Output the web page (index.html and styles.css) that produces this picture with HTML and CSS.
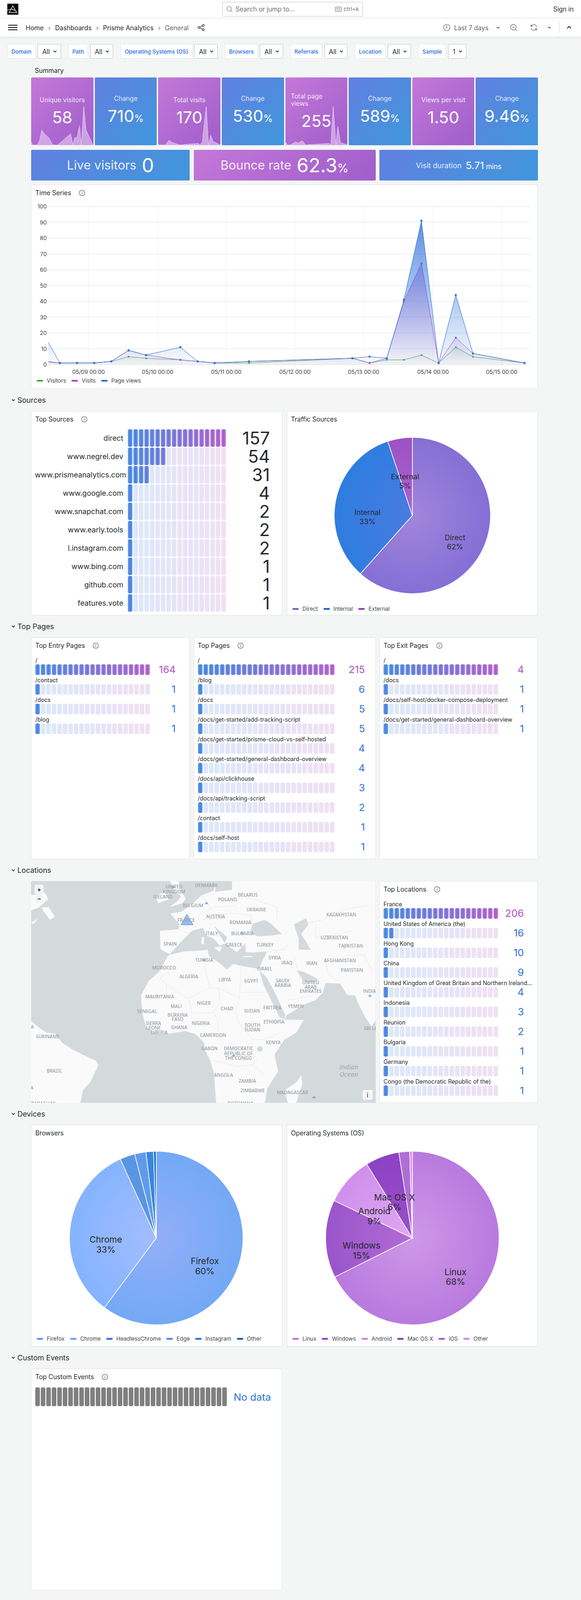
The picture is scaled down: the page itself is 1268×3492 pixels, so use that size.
FILE: index.html
```html
<!DOCTYPE html>
<html lang="en">
	<head>
		<meta charset="UTF-8" />
		<meta name="viewport" content="width=device-width, initial-scale=1.0" />
		<title>General - Prisme Analytics</title>
		<link rel="stylesheet" href="styles.css">
	</head>
	<body>
		<svg class="defs" width="0" height="0">
			<symbol id="i-info" viewBox="0 0 14 14">
				<circle cx="7" cy="7" r="6" fill="none" stroke="currentColor" stroke-width="1.1" />
				<path d="M7 6.4v3.4" stroke="currentColor" stroke-width="1.3" />
				<circle cx="7" cy="4.4" r=".8" fill="currentColor" />
			</symbol>
			<symbol id="i-chevron" viewBox="0 0 10 10">
				<path d="M2 3.6l3 3 3-3" fill="none" stroke="currentColor" stroke-width="1.5" />
			</symbol>
		</svg>

		<header class="topbar">
			<svg class="logo" viewBox="0 0 24 24">
				<rect width="24" height="24" fill="#000" />
				<path d="M12 4.8L4 19.4h16.6z" fill="none" stroke="#fff" stroke-width="1.2" />
				<path d="M0 13.8l9.4-2.4" stroke="#fff" stroke-width="1" />
				<path d="M9.4 11.4l6.6 1.4" stroke="#ee3b3b" stroke-width="1" />
				<path d="M9.4 11.6l7.2 3" stroke="#e8e337" stroke-width="1" />
				<path d="M9.4 11.8l8 4.4" stroke="#47d147" stroke-width="1" />
				<path d="M9.4 12l4 4.8" stroke="#d04fd0" stroke-width="1" />
			</svg>
			<div class="search">
				<svg class="search-icon" viewBox="0 0 16 16">
					<circle cx="7" cy="7" r="5.6" fill="none" stroke="currentColor" stroke-width="1.2" />
					<path d="M11 11l4 4" stroke="currentColor" stroke-width="1.2" />
				</svg>
				<span class="search-text">Search or jump to...</span>
				<svg class="keyboard" viewBox="0 0 16 14">
					<rect x="1" y="2" width="14" height="10" rx="1.5" fill="none" stroke="currentColor" stroke-width="1.1" />
					<path d="M3 5h10M3 7h10M4.5 9.5h7" stroke="currentColor" stroke-width="1.1" stroke-dasharray="1.2 .9" />
				</svg>
				<span class="search-key">ctrl+k</span>
			</div>
			<a class="sign-in">Sign in</a>
		</header>

		<nav class="navbar">
			<svg class="hamburger" viewBox="0 0 20 12">
				<path d="M0 1h20M0 6h20M0 11h20" stroke="#24292e" stroke-width="2" />
			</svg>
			<ol class="crumbs">
				<li>Home</li>
				<li class="sep">›</li>
				<li>Dashboards</li>
				<li class="sep">›</li>
				<li>Prisme Analytics</li>
				<li class="sep">›</li>
				<li class="current">General</li>
			</ol>
			<svg class="share" viewBox="0 0 16 16">
				<g fill="none" stroke="currentColor" stroke-width="1.2">
					<circle cx="3.2" cy="8" r="2.2" />
					<circle cx="12.6" cy="3.2" r="2.2" />
					<circle cx="12.6" cy="12.8" r="2.2" />
					<path d="M5.2 7l5.4-2.8M5.2 9l5.4 2.8" />
				</g>
			</svg>
			<div class="time-tools">
				<svg class="tool-icon clock" viewBox="0 0 16 16">
					<circle cx="8" cy="8" r="7" fill="none" stroke="currentColor" stroke-width="1.2" />
					<path d="M8 3.6V8.4L5.6 9.6" fill="none" stroke="currentColor" stroke-width="1.2" />
				</svg>
				<span class="time-range">Last 7 days</span>
				<svg class="chev chev-range"><use href="#i-chevron" /></svg>
				<svg class="tool-icon zoom-out" viewBox="0 0 16 16">
					<circle cx="7.4" cy="7.4" r="6" fill="none" stroke="currentColor" stroke-width="1.2" />
					<path d="M4.8 7.4h5.2M11.8 11.8l3.2 3.2" stroke="currentColor" stroke-width="1.2" />
				</svg>
				<svg class="tool-icon refresh" viewBox="0 0 16 16">
					<path d="M14 6.6A6.2 6.2 0 0 0 3.2 4L1.8 5.4M2 9.4A6.2 6.2 0 0 0 12.8 12l1.4-1.4" fill="none" stroke="currentColor" stroke-width="1.2" />
					<path d="M1.8 1.6v3.8h3.8M14.2 14.4v-3.8h-3.8" fill="none" stroke="currentColor" stroke-width="1.2" />
				</svg>
				<svg class="chev chev-refresh"><use href="#i-chevron" /></svg>
				<span class="divider"></span>
				<svg class="chev-up" viewBox="0 0 10 10">
					<path d="M1.5 6.6L5 3.2l3.5 3.4" fill="none" stroke="#24292e" stroke-width="1.6" />
				</svg>
			</div>
		</nav>

		<div class="variables">
			<div class="variable"><label>Domain</label><span class="select">All<svg class="chev"><use href="#i-chevron" /></svg></span></div>
			<div class="variable"><label>Path</label><span class="select">All<svg class="chev"><use href="#i-chevron" /></svg></span></div>
			<div class="variable"><label>Operating Systems (OS)</label><span class="select">All<svg class="chev"><use href="#i-chevron" /></svg></span></div>
			<div class="variable"><label>Browsers</label><span class="select">All<svg class="chev"><use href="#i-chevron" /></svg></span></div>
			<div class="variable"><label>Referrals</label><span class="select">All<svg class="chev"><use href="#i-chevron" /></svg></span></div>
			<div class="variable"><label>Location</label><span class="select">All<svg class="chev"><use href="#i-chevron" /></svg></span></div>
			<div class="variable"><label>Sample</label><span class="select select-small">1<svg class="chev"><use href="#i-chevron" /></svg></span></div>
		</div>

		<main class="dashboard">
			<h2 class="summary-title">Summary</h2>
			<div class="stats">
				<div class="stat purple">
					<svg class="spark" viewBox="167 507 332 443" preserveAspectRatio="none"><polygon points="167,930 175,948 200,948 212,920 224,850 235,872 260,900 282,948 308,948 378,875 390,948 400,900 412,900 425,823 435,948 448,697 460,850 497,948 497,950 167,950" /></svg>
					<div class="stat-title">Unique visitors</div>
					<div class="stat-value">58</div>
				</div>
				<div class="stat blue">
					<div class="stat-title">Change</div>
					<div class="stat-value">710<span class="unit">%</span></div>
				</div>
				<div class="stat purple">
					<svg class="spark" viewBox="845 507 333 443" preserveAspectRatio="none"><polygon points="845,940 850,948 885,948 903,918 920,932 960,948 1060,938 1070,948 1082,930 1103,697 1115,948 1127,885 1140,925 1178,948 1178,950 845,950" /></svg>
					<div class="stat-title">Total visits</div>
					<div class="stat-value">170</div>
				</div>
				<div class="stat blue">
					<div class="stat-title">Change</div>
					<div class="stat-value">530<span class="unit">%</span></div>
				</div>
				<div class="stat purple">
					<svg class="spark" viewBox="-18 507 333 443" preserveAspectRatio="none"><polygon points="-18,930 -8,948 10,948 35,928 50,936 72,921 90,948 215,938 225,948 238,697 252,948 263,828 276,932 313,948 315,950 -18,950" /></svg>
					<div class="stat-title stat-title-wrap">Total page views</div>
					<div class="stat-value">255</div>
				</div>
				<div class="stat blue">
					<div class="stat-title">Change</div>
					<div class="stat-value">589<span class="unit">%</span></div>
				</div>
				<div class="stat purple">
					<div class="stat-title">Views per visit</div>
					<div class="stat-value">1.50</div>
				</div>
				<div class="stat blue">
					<div class="stat-title">Change</div>
					<div class="stat-value">9.46<span class="unit">%</span></div>
				</div>
			</div>

			<div class="wide-stats">
				<div class="wide-stat blue"><span class="wide-title">Live visitors</span><span class="wide-value">0</span></div>
				<div class="wide-stat purple"><span class="wide-title">Bounce rate</span><span class="wide-value">62.3<span class="wide-unit">%</span></span></div>
				<div class="wide-stat blue small"><span class="wide-title">Visit duration</span><span class="wide-value">5.71<span class="wide-unit"> mins</span></span></div>
			</div>

			<section class="panel panel-time">
				<h3 class="panel-title">Time Series <svg class="info"><use href="#i-info" /></svg></h3>
				<svg id="timeseries" class="chart" viewBox="0 0 1104 380"></svg>
				<div class="legend legend-time">
					<span class="key"><i class="swatch green"></i>Visitors</span>
					<span class="key"><i class="swatch violet"></i>Visits</span>
					<span class="key"><i class="swatch azure"></i>Page views</span>
				</div>
			</section>

			<h2 class="row-title"><svg class="chev"><use href="#i-chevron" /></svg>Sources</h2>
			<div class="two-cols sources-row">
				<section class="panel">
					<h3 class="panel-title">Top Sources <svg class="info"><use href="#i-info" /></svg></h3>
					<div class="source-list">
						<div class="source"><span class="source-name">direct</span><div class="gauge" data-cells="18" data-lit="18"></div><span class="source-value">157</span></div>
						<div class="source"><span class="source-name">www.negrel.dev</span><div class="gauge" data-cells="18" data-lit="7"></div><span class="source-value">54</span></div>
						<div class="source"><span class="source-name">www.prismeanalytics.com</span><div class="gauge" data-cells="18" data-lit="4"></div><span class="source-value">31</span></div>
						<div class="source"><span class="source-name">www.google.com</span><div class="gauge" data-cells="18" data-lit="1"></div><span class="source-value">4</span></div>
						<div class="source"><span class="source-name">www.snapchat.com</span><div class="gauge" data-cells="18" data-lit="1"></div><span class="source-value">2</span></div>
						<div class="source"><span class="source-name">www.early.tools</span><div class="gauge" data-cells="18" data-lit="1"></div><span class="source-value">2</span></div>
						<div class="source"><span class="source-name">l.instagram.com</span><div class="gauge" data-cells="18" data-lit="1"></div><span class="source-value">2</span></div>
						<div class="source"><span class="source-name">www.bing.com</span><div class="gauge" data-cells="18" data-lit="1"></div><span class="source-value">1</span></div>
						<div class="source"><span class="source-name">github.com</span><div class="gauge" data-cells="18" data-lit="1"></div><span class="source-value">1</span></div>
						<div class="source"><span class="source-name">features.vote</span><div class="gauge" data-cells="18" data-lit="1"></div><span class="source-value">1</span></div>
					</div>
				</section>
				<section class="panel">
					<h3 class="panel-title">Traffic Sources</h3>
					<svg class="pie pie-sources" viewBox="0 0 546 388" data-cx="273" data-cy="194" data-r="170.5"
						data-slices="61.6:#a285dc:#846fd5,33.3:#4a7be0:#2e7de0,5.1:#ad62d0:#9c52c4">
						<text x="366" y="242">Direct</text><text x="366" y="262">62%</text>
						<text x="175" y="187">Internal</text><text x="175" y="207">33%</text>
						<text x="257" y="109">External</text><text x="257" y="129">5%</text>
					</svg>
					<div class="legend">
						<span class="key"><i class="swatch sw-direct"></i>Direct</span>
						<span class="key"><i class="swatch sw-internal"></i>Internal</span>
						<span class="key"><i class="swatch sw-external"></i>External</span>
					</div>
				</section>
			</div>

			<h2 class="row-title"><svg class="chev"><use href="#i-chevron" /></svg>Top Pages</h2>
			<div class="three-cols">
				<section class="panel">
					<h3 class="panel-title">Top Entry Pages <svg class="info"><use href="#i-info" /></svg></h3>
					<div class="rows">
						<div class="row"><span class="row-label">/</span><div class="gauge" data-cells="21" data-lit="21"></div><span class="row-value top">164</span></div>
						<div class="row"><span class="row-label">/contact</span><div class="gauge" data-cells="21" data-lit="1"></div><span class="row-value">1</span></div>
						<div class="row"><span class="row-label">/docs</span><div class="gauge" data-cells="21" data-lit="1"></div><span class="row-value">1</span></div>
						<div class="row"><span class="row-label">/blog</span><div class="gauge" data-cells="21" data-lit="1"></div><span class="row-value">1</span></div>
					</div>
				</section>
				<section class="panel">
					<h3 class="panel-title">Top Pages <svg class="info"><use href="#i-info" /></svg></h3>
					<div class="rows rows-wide">
						<div class="row"><span class="row-label">/</span><div class="gauge" data-cells="25" data-lit="25"></div><span class="row-value top">215</span></div>
						<div class="row"><span class="row-label">/blog</span><div class="gauge" data-cells="25" data-lit="1"></div><span class="row-value">6</span></div>
						<div class="row"><span class="row-label">/docs</span><div class="gauge" data-cells="25" data-lit="1"></div><span class="row-value">5</span></div>
						<div class="row"><span class="row-label">/docs/get-started/add-tracking-script</span><div class="gauge" data-cells="25" data-lit="1"></div><span class="row-value">5</span></div>
						<div class="row"><span class="row-label">/docs/get-started/prisme-cloud-vs-self-hosted</span><div class="gauge" data-cells="25" data-lit="1"></div><span class="row-value">4</span></div>
						<div class="row"><span class="row-label">/docs/get-started/general-dashboard-overview</span><div class="gauge" data-cells="25" data-lit="1"></div><span class="row-value">4</span></div>
						<div class="row"><span class="row-label">/docs/api/clickhouse</span><div class="gauge" data-cells="25" data-lit="1"></div><span class="row-value">3</span></div>
						<div class="row"><span class="row-label">/docs/api/tracking-script</span><div class="gauge" data-cells="25" data-lit="1"></div><span class="row-value">2</span></div>
						<div class="row"><span class="row-label">/contact</span><div class="gauge" data-cells="25" data-lit="1"></div><span class="row-value">1</span></div>
						<div class="row"><span class="row-label">/docs/self-host</span><div class="gauge" data-cells="25" data-lit="1"></div><span class="row-value">1</span></div>
					</div>
				</section>
				<section class="panel">
					<h3 class="panel-title">Top Exit Pages <svg class="info"><use href="#i-info" /></svg></h3>
					<div class="rows">
						<div class="row"><span class="row-label">/</span><div class="gauge" data-cells="21" data-lit="21"></div><span class="row-value top">4</span></div>
						<div class="row"><span class="row-label">/docs</span><div class="gauge" data-cells="21" data-lit="1"></div><span class="row-value">1</span></div>
						<div class="row"><span class="row-label">/docs/self-host/docker-compose-deployment</span><div class="gauge" data-cells="21" data-lit="1"></div><span class="row-value">1</span></div>
						<div class="row"><span class="row-label">/docs/get-started/general-dashboard-overview</span><div class="gauge" data-cells="21" data-lit="1"></div><span class="row-value">1</span></div>
					</div>
				</section>
			</div>

			<h2 class="row-title"><svg class="chev"><use href="#i-chevron" /></svg>Locations</h2>
			<div class="map-cols">
				<section class="map-panel">
					<svg id="map" class="map" viewBox="0 0 751 484">
						<g transform="translate(-67.5 -43) scale(.5294 .3444)">
							<rect x="127" y="125" width="1421" height="1406" fill="#d4dadc" />
							<g fill="#fafafa">
								<polygon points="955,125 1547,125 1547,1010 1530,1045 1505,990 1475,900 1462,850 1430,845 1400,775 1340,770 1330,830 1300,880 1260,900 1180,975 1172,1003 1250,1005 1220,1085 1170,1130 1130,1225 1145,1330 1100,1440 1090,1530 890,1530 880,1340 865,1260 845,1200 838,1145 805,1095 760,1075 700,1090 650,1095 600,1050 585,960 580,850 610,760 655,700 690,600 700,590 660,555 658,440 735,430 737,395 700,330 745,320 795,265 830,215 880,185 890,130 905,125" />
								<polygon points="700,125 735,125 740,180 765,235 750,265 698,290 735,245 745,220 722,190" />
								<polygon points="640,215 680,195 695,240 650,265" />
								<polygon points="127,215 185,200 197,240 160,290 127,310" />
								<polygon points="170,290 200,290 225,350 205,370 180,320" />
								<polygon points="127,385 155,365 135,400" />
								<polygon points="127,1010 155,1050 190,1085 225,1090 255,1150 300,1195 395,1265 405,1290 370,1400 340,1450 330,1530 127,1530" />
								<polygon points="1240,1355 1245,1410 1220,1530 1185,1530 1172,1450 1220,1400" />
							</g>
							<g fill="#d4dadc">
								<polygon points="905,125 955,125 955,180 900,190 885,195 890,130" />
								<polygon points="695,592 760,570 830,565 855,560 860,600 900,640 935,685 960,650 1000,665 1065,680 1100,570 1040,578 1012,575 1010,520 975,575 925,520 935,480 870,395 835,420 790,440 745,510" />
								<polygon points="1030,450 1040,395 1090,370 1120,400 1160,460 1120,470 1060,475" />
								<polygon points="1210,400 1260,360 1270,400 1240,460 1280,560 1230,560 1230,490" />
								<polygon points="1068,695 1095,730 1125,810 1175,975 1170,1000 1150,985 1110,860 1085,780" />
								<polygon points="1222,690 1250,700 1310,745 1290,772 1250,760" />
								<ellipse cx="1070" cy="1188" rx="12" ry="18" />
							</g>
							<g fill="#fafafa">
								<polygon points="835,420 850,405 875,395 905,470 925,520 905,535 880,490 850,470" />
								<polygon points="880,545 915,540 905,575" />
								<polygon points="830,480 840,480 840,525 828,525" />
								<polygon points="1000,600 1040,600 1040,606 1000,606" />
							</g>
							<path class="borders" d="M845 600L845 690L865 800L770 870L685 780L660 740L720 660M865 800L900 805L985 865L993 665M993 830L1110 830M900 805L905 880L880 960L895 1010L900 1080M985 865L970 960L985 1030L1040 1130M780 880L790 960L880 960M600 860L685 850L685 780M1090 1010L1170 1000M1040 1130L1085 1130L1150 1090M1060 1250L1040 1290L1085 1350M870 1260L980 1300L1040 1290M830 215L870 300L820 340L810 400M735 430L780 460M880 290L970 280L990 210L1060 250L1140 290L1140 370M890 340L960 330L1030 340L1040 395M830 370L930 360M1100 570L1170 560L1190 520M1210 600L1225 680M1300 400L1300 480L1360 470L1450 440M1340 620L1350 710L1400 770M1430 600L1500 590L1530 690M1180 880L1300 850L1310 790M1240 400L1330 370L1430 300L1520 280" />
							<g class="markers">
								<polygon points="769,335 744,402 795,402" />
								<polygon points="714,153 708,165 720,165" />
								<polygon points="850,257 844,269 856,269" />
								<polygon points="997,446 991,458 1003,458" />
								<polygon points="840,617 834,629 846,629" />
								<polygon points="1524,844 1518,856 1530,856" />
								<polygon points="961,1224 955,1236 967,1236" />
								<polygon points="1293,1487 1287,1499 1299,1499" />
							</g>
						</g>
					</svg>
					<div class="map-zoom"><span>+</span><span>−</span></div>
					<div class="map-attr">i</div>
				</section>
				<section class="panel">
					<h3 class="panel-title">Top Locations <svg class="info"><use href="#i-info" /></svg></h3>
					<div class="rows">
						<div class="row"><span class="row-label">France</span><div class="gauge" data-cells="21" data-lit="21"></div><span class="row-value top">206</span></div>
						<div class="row"><span class="row-label">United States of America (the)</span><div class="gauge" data-cells="21" data-lit="2"></div><span class="row-value">16</span></div>
						<div class="row"><span class="row-label">Hong Kong</span><div class="gauge" data-cells="21" data-lit="1"></div><span class="row-value">10</span></div>
						<div class="row"><span class="row-label">China</span><div class="gauge" data-cells="21" data-lit="1"></div><span class="row-value">9</span></div>
						<div class="row"><span class="row-label">United Kingdom of Great Britain and Northern Ireland...</span><div class="gauge" data-cells="21" data-lit="1"></div><span class="row-value">4</span></div>
						<div class="row"><span class="row-label">Indonesia</span><div class="gauge" data-cells="21" data-lit="1"></div><span class="row-value">3</span></div>
						<div class="row"><span class="row-label">Réunion</span><div class="gauge" data-cells="21" data-lit="1"></div><span class="row-value">2</span></div>
						<div class="row"><span class="row-label">Bulgaria</span><div class="gauge" data-cells="21" data-lit="1"></div><span class="row-value">1</span></div>
						<div class="row"><span class="row-label">Germany</span><div class="gauge" data-cells="21" data-lit="1"></div><span class="row-value">1</span></div>
						<div class="row"><span class="row-label">Congo (the Democratic Republic of the)</span><div class="gauge" data-cells="21" data-lit="1"></div><span class="row-value">1</span></div>
					</div>
				</section>
			</div>

			<h2 class="row-title"><svg class="chev"><use href="#i-chevron" /></svg>Devices</h2>
			<div class="two-cols">
				<section class="panel">
					<h3 class="panel-title">Browsers</h3>
					<svg class="pie pie-devices" viewBox="0 0 546 420" data-cx="272" data-cy="210" data-r="189.4"
						data-slices="60.2:#93aef8:#73a9f5,33:#a3bdff:#85b3ff,2.8:#5a95e3:#5a95e3,2.1:#5f9bec:#5f9bec,1.4:#3a86dc:#3a86dc,.5:#1f74d0:#1f74d0">
						<text x="162" y="213">Chrome</text><text x="162" y="235">33%</text>
						<text x="378" y="260">Firefox</text><text x="378" y="282">60%</text>
					</svg>
					<div class="legend">
						<span class="key"><i class="swatch sw-firefox"></i>Firefox</span>
						<span class="key"><i class="swatch sw-chrome"></i>Chrome</span>
						<span class="key"><i class="swatch sw-headless"></i>HeadlessChrome</span>
						<span class="key"><i class="swatch sw-edge"></i>Edge</span>
						<span class="key"><i class="swatch sw-instagram"></i>Instagram</span>
						<span class="key"><i class="swatch sw-other-browser"></i>Other</span>
					</div>
				</section>
				<section class="panel">
					<h3 class="panel-title">Operating Systems (OS)</h3>
					<svg class="pie pie-devices" viewBox="0 0 546 420" data-cx="273" data-cy="210" data-r="189.4"
						data-slices="67.6:#cf98e8:#b87ade,14.5:#b26bd3:#9b55cc,9.1:#e0a8f2:#cf90ed,6.3:#9a50c8:#8c42c4,2:#ad6fd5:#ad6fd5,.5:#dd8df5:#dd8df5">
						<text x="367" y="284">Linux</text><text x="367" y="305">68%</text>
						<text x="162" y="226">Windows</text><text x="162" y="248">15%</text>
						<text x="234" y="121">Mac OS X</text><text x="234" y="142">6%</text>
						<text x="190" y="151">Android</text><text x="190" y="173">9%</text>
					</svg>
					<div class="legend">
						<span class="key"><i class="swatch sw-linux"></i>Linux</span>
						<span class="key"><i class="swatch sw-windows"></i>Windows</span>
						<span class="key"><i class="swatch sw-android"></i>Android</span>
						<span class="key"><i class="swatch sw-mac"></i>Mac OS X</span>
						<span class="key"><i class="swatch sw-ios"></i>iOS</span>
						<span class="key"><i class="swatch sw-other-os"></i>Other</span>
					</div>
				</section>
			</div>

			<h2 class="row-title"><svg class="chev"><use href="#i-chevron" /></svg>Custom Events</h2>
			<div class="two-cols">
				<section class="panel">
					<h3 class="panel-title">Top Custom Events <svg class="info"><use href="#i-info" /></svg></h3>
					<div class="no-data">
						<div class="gauge gauge-empty" data-cells="35" data-lit="0"></div>
						<span class="no-data-text">No data</span>
					</div>
				</section>
			</div>
		</main>

		<script src="app.js"></script>
	</body>
</html>
```

FILE: styles.css
```css
* {
	box-sizing: border-box;
}
body {
	font-family: Inter, "Liberation Sans", sans-serif;
	background-color: #f4f5f5;
	color: #24292e;
	font-size: 14px;
	margin: 0;
}
h2, h3, ol {
	margin: 0;
	padding: 0;
	font-weight: 400;
}
.defs {
	position: absolute;
}

/* top bars */
.topbar {
	height: 40px;
	background-color: #fff;
	border-bottom: 1px solid #e3e5e6;
	display: flex;
	align-items: center;
	padding: 0 16px;
}
.logo {
	width: 24px;
	height: 24px;
}
.search {
	width: 307px;
	height: 32px;
	margin-left: 445px;
	border: 1px solid #c6c9cb;
	border-radius: 2px;
	display: flex;
	align-items: center;
	padding: 0 8px;
	color: #6c7278;
}
.search-icon {
	width: 14px;
	height: 14px;
}
.search-text {
	margin-left: 6px;
	flex: 1;
}
.keyboard {
	width: 15px;
	height: 14px;
	margin-right: 4px;
}
.search-key {
	font-size: 12px;
}
.sign-in {
	margin-left: auto;
}
.navbar {
	height: 40px;
	background-color: #fff;
	display: flex;
	align-items: center;
	padding-left: 18px;
	box-shadow: 0 2px 6px rgba(36, 41, 46, 0.08);
}
.hamburger {
	width: 20px;
	height: 12px;
	margin-right: 18px;
}
.crumbs {
	display: flex;
	list-style: none;
	align-items: center;
}
.crumbs .sep {
	width: 25px;
	text-align: center;
	color: #6c7278;
}
.crumbs .current {
	color: #5f666d;
}
.share {
	width: 16px;
	height: 16px;
	margin-left: 19px;
	color: #24292e;
}
.time-tools {
	margin-left: auto;
	display: flex;
	align-items: center;
	color: #5f666d;
}
.tool-icon {
	width: 16px;
	height: 16px;
}
.time-range {
	margin-left: 8px;
	width: 91px;
}
.chev {
	width: 10px;
	height: 10px;
	flex: none;
}
.chev-range {
	margin-right: 21px;
}
.refresh {
	margin-left: 28px;
}
.chev-refresh {
	margin-left: 21px;
}
.divider {
	width: 1px;
	height: 24px;
	background-color: #d9dbdd;
	margin-left: 16px;
}
.chev-up {
	width: 12px;
	height: 12px;
	margin: 0 20px 0 15px;
}

/* variables */
.variables {
	display: flex;
	gap: 16px;
	padding: 16px 0 0 16px;
}
.variable {
	display: flex;
	gap: 4.5px;
	height: 32px;
}
.variable label {
	display: flex;
	align-items: center;
	padding: 0 8px;
	background-color: #fff;
	border: 1px solid #e6e8e9;
	border-radius: 2px;
	color: #2a6bdc;
	font-size: 12px;
	font-weight: 500;
}
.select {
	width: 50.5px;
	display: flex;
	align-items: center;
	gap: 6px;
	padding-left: 9px;
	background-color: #fff;
	border: 1px solid #c6c9cb;
	border-radius: 2px;
}
.select-small {
	width: 40.5px;
}

/* layout */
.dashboard {
	padding: 0 94px 21px 68px;
}
.summary-title {
	font-size: 14px;
	height: 20px;
	line-height: 20px;
	margin: 16px 0 5px 8px;
}
.row-title {
	display: flex;
	align-items: center;
	gap: 4px;
	height: 32px;
	margin: 8px 0 8px -44px;
	font-size: 16px;
}
.two-cols {
	display: grid;
	grid-template-columns: 548px 548px;
	gap: 10px;
}
.three-cols {
	display: grid;
	grid-template-columns: 346px 397px 346px;
	gap: 8.5px;
}
.map-cols {
	display: grid;
	grid-template-columns: 751.5px 346px;
	gap: 8.5px;
}

/* stats */
.stats {
	display: grid;
	grid-template-columns: repeat(8, 1fr);
	gap: 3px;
}
.stat {
	height: 148px;
	border-radius: 2px;
	position: relative;
	color: #fff;
	display: flex;
	flex-direction: column;
	align-items: center;
	justify-content: center;
	padding: 0 12px;
	overflow: hidden;
}
.purple {
	background: linear-gradient(135deg, #c478d8, #9f5ecb);
}
.blue {
	background: linear-gradient(135deg, #6180e0, #3f97dc);
}
.spark {
	position: absolute;
	inset: 0;
	width: 100%;
	height: 100%;
}
.spark polygon {
	fill: rgba(255, 255, 255, 0.42);
	stroke: rgba(255, 210, 255, 0.8);
	stroke-width: 1;
	vector-effect: non-scaling-stroke;
}
.stat-title {
	position: relative;
	line-height: 16.5px;
	margin-bottom: 9.5px;
	width: fit-content;
	color: rgba(255, 255, 255, 0.86);
}
.stat-title-wrap {
	align-self: flex-start;
	max-width: 90px;
}
.stat-value {
	position: relative;
	font-size: 36px;
	line-height: 40px;
}
.unit {
	font-size: 21px;
}
.wide-stats {
	display: grid;
	grid-template-columns: 346px 397px 346px;
	gap: 8.5px;
	margin: 10px 0 9px;
}
.wide-stat {
	height: 67px;
	border-radius: 2px;
	color: #fff;
	display: flex;
	align-items: center;
	justify-content: center;
	gap: 12px;
}
.wide-title {
	font-size: 27px;
	color: rgba(255, 255, 255, 0.88);
}
.wide-value {
	font-size: 42px;
}
.wide-unit {
	font-size: 25px;
}
.small {
	gap: 9px;
}
.small .wide-title {
	font-size: 16px;
}
.small .wide-value {
	font-size: 22px;
}
.small .wide-unit {
	font-size: 15px;
}

/* panels */
.panel {
	background-color: #fff;
	border: 1px solid #e4e6e7;
	border-radius: 2px;
	height: 484px;
	display: flex;
	flex-direction: column;
}
.sources-row .panel {
	height: 446px;
}
.panel-time {
	height: 446px;
}
.panel-title {
	font-size: 14px;
	height: 36px;
	line-height: 34px;
	padding-left: 8px;
	flex: none;
	white-space: nowrap;
}
.info {
	width: 14px;
	height: 14px;
	margin-left: 13px;
	vertical-align: -2px;
	color: #5f666d;
}
.chart {
	width: 1104px;
	height: 380px;
	display: block;
	flex: none;
}
.chart text {
	font-size: 12px;
	fill: #3c4248;
	dominant-baseline: central;
}
.legend {
	display: flex;
	gap: 12px;
	padding-left: 11px;
	font-size: 12px;
	color: #41474d;
	line-height: 16px;
	margin-top: 2px;
}
.legend-time {
	margin-top: 3px;
}
.key {
	display: flex;
	align-items: center;
}
.swatch {
	width: 14px;
	height: 4px;
	border-radius: 2px;
	margin-right: 8px;
}
.green { background-color: #56a64b; }
.violet { background-color: #a352cc; }
.azure { background-color: #3274d9; }
.sw-direct { background-color: #7e5fd0; }
.sw-internal { background-color: #1f66cc; }
.sw-external { background-color: #8f3fb8; }
.sw-firefox { background-color: #5794f2; }
.sw-chrome { background-color: #6ea0f5; }
.sw-headless { background-color: #3274d9; }
.sw-edge { background-color: #4a86ea; }
.sw-instagram { background-color: #2a6fd0; }
.sw-other-browser { background-color: #1f60b4; }
.sw-linux { background-color: #b877d9; }
.sw-windows { background-color: #9a3fc8; }
.sw-android { background-color: #c583e5; }
.sw-mac { background-color: #8a38b8; }
.sw-ios { background-color: #a85cd0; }
.sw-other-os { background-color: #d683f0; }

/* gauges */
.gauge {
	display: flex;
	gap: 2px;
}
.cell {
	flex: 1;
	border-radius: 3px;
	background: color-mix(in srgb, var(--c) 18%, #fff);
}
.cell.lit {
	background: linear-gradient(90deg, color-mix(in srgb, var(--c) 72%, #fff), var(--c) 50%, color-mix(in srgb, var(--c) 72%, #fff));
}
.gauge-empty .cell {
	background: #808080;
}
.source-list {
	padding: 3px 0 0 7px;
}
.source {
	display: grid;
	grid-template-columns: 193px 214px 86px;
	column-gap: 10px;
	align-items: center;
	height: 38px;
	margin-bottom: 2px;
}
.source .gauge {
	height: 38px;
}
.source-name {
	font-size: 16px;
	text-align: right;
	white-space: nowrap;
}
.source-value {
	font-size: 38px;
	text-align: right;
	line-height: 38px;
}
.rows {
	padding: 2px 0 0 8px;
}
.row {
	display: grid;
	grid-template-columns: 250px 56.5px;
	height: 43px;
}
.rows-wide .row {
	grid-template-columns: 298px 67px;
}
.row-label {
	grid-column: 1 / 3;
	height: 20px;
	line-height: 23px;
	font-size: 12.5px;
	white-space: nowrap;
}
.row .gauge {
	height: 23px;
}
.row-value {
	font-size: 22px;
	line-height: 23px;
	text-align: right;
	color: #3274d9;
}
.row-value.top {
	color: #a855c8;
}

/* map */
.map-panel {
	height: 484px;
	position: relative;
	overflow: hidden;
}
.map {
	display: block;
	width: 100%;
	height: 100%;
}
.map text {
	font-family: "Open Sans", sans-serif;
	font-weight: 600;
	font-size: 10px;
	fill: #9ba4aa;
	text-anchor: middle;
	dominant-baseline: central;
}
.map text.ocean {
	font-size: 14px;
	font-style: italic;
	fill: #a7b1b7;
}
.borders {
	fill: none;
	stroke: #f3e6e6;
	stroke-width: 1;
	vector-effect: non-scaling-stroke;
}
.markers polygon {
	fill: rgba(87, 148, 242, 0.6);
	stroke: #5794f2;
	stroke-width: 1;
	vector-effect: non-scaling-stroke;
}
.map-zoom {
	position: absolute;
	left: 8px;
	top: 8px;
	width: 19px;
	display: flex;
	flex-direction: column;
	gap: 1px;
	border: 1px solid #fff;
	border-radius: 2px;
}
.map-zoom span {
	height: 19px;
	background-color: #f2f3f3;
	text-align: center;
	line-height: 18px;
	font-weight: 700;
	font-size: 13px;
}
.map-attr {
	position: absolute;
	right: 7px;
	bottom: 7px;
	width: 21px;
	height: 21px;
	background-color: #f4f5f5;
	border: 1px solid #fff;
	border-radius: 2px;
	text-align: center;
	line-height: 19px;
	font-size: 14px;
}

/* pies */
.pie {
	display: block;
	width: 100%;
	flex: none;
}
.pie-sources {
	height: 388px;
	margin-top: -3px;
}
.pie-devices {
	height: 420px;
}
.pie text {
	text-anchor: middle;
	dominant-baseline: central;
	fill: #24292e;
}
.pie-sources text {
	font-size: 16px;
}
.pie-devices text {
	font-size: 19px;
}

/* no data */
.no-data {
	display: flex;
	align-items: center;
	padding: 4px 0 0 8px;
}
.no-data .gauge {
	width: 418px;
	height: 41px;
}
.no-data-text {
	margin-left: 15px;
	font-size: 22px;
	color: #3274d9;
}
```

FILE: app.js
```js
// fills the bar gauges, the pies, the time series and the map labels

var COLD = [61, 127, 224];
var HOT = [170, 84, 200];

function mix(t) {
	var c = COLD.map(function (v, i) {
		return Math.round(v + (HOT[i] - v) * t);
	});
	return "rgb(" + c.join(",") + ")";
}

document.querySelectorAll(".gauge").forEach(function (g) {
	var cells = +g.dataset.cells;
	var lit = +g.dataset.lit;
	var html = "";
	for (var i = 0; i < cells; i++) {
		html += '<span class="cell' + (i < lit ? " lit" : "") + '" style="--c:' + mix(i / (cells - 1)) + '"></span>';
	}
	g.innerHTML = html;
});

// pies, slices are percent:centre colour:edge colour from 12 o'clock
var pieId = 0;
document.querySelectorAll(".pie").forEach(function (svg) {
	var cx = +svg.dataset.cx, cy = +svg.dataset.cy, r = +svg.dataset.r;
	var start = 0, defs = "", paths = "";
	svg.dataset.slices.split(",").forEach(function (s) {
		var p = s.split(":");
		var end = start + parseFloat(p[0]);
		var a0 = start / 100 * 2 * Math.PI, a1 = end / 100 * 2 * Math.PI;
		var id = "slice" + pieId++;
		defs += '<radialGradient id="' + id + '" gradientUnits="userSpaceOnUse" cx="' + cx + '" cy="' + cy + '" r="' + r + '">' +
			'<stop offset="0" stop-color="' + p[1] + '"/><stop offset="1" stop-color="' + p[2] + '"/></radialGradient>';
		paths += '<path fill="url(#' + id + ')" stroke="#fff" stroke-width="1.4" d="M' + cx + " " + cy +
			"L" + (cx + r * Math.sin(a0)) + " " + (cy - r * Math.cos(a0)) +
			"A" + r + " " + r + " 0 " + (a1 - a0 > Math.PI ? 1 : 0) + " 1 " + (cx + r * Math.sin(a1)) + " " + (cy - r * Math.cos(a1)) + 'Z"/>';
		start = end;
	});
	svg.insertAdjacentHTML("afterbegin", "<defs>" + defs + "</defs>" + paths);
});

// time series
var TX = [63, 98, 150, 202, 254, 306, 359, 463, 515, 567, 671, 984, 1036, 1088, 1140, 1193, 1245, 1297, 1349, 1505];
var SERIES = [
	{ color: "#56a64b", top: 0.14, values: [1.5, 1, 1, 1, 2, 5, 4, 3, 2, 1, 1, 4, 1, 3, 3, 6, 1, 11, 5, 1], peak: 11, rad: 2 },
	{ color: "#a352cc", top: 0.5, values: [2, 1, 1, 1, 2, 9, 6, 3, 2, 1, 2, 4, 1, 4, 40, 64, 1, 17, 7, 1], peak: 64, rad: 2.2 },
	{ color: "#3274d9", top: 0.8, values: [14, 1, 1, 1, 2, 9, 6, 11, 2, 1, 2, 4, 5, 4, 41, 91, 1, 44, 7, 1], peak: 91, rad: 2.4 }
];
var DAYS = [["05/09", 193.3], ["05/10", 344], ["05/11", 493.8], ["05/12", 643.7], ["05/13", 793.6], ["05/14", 945], ["05/15", 1094.9]];

function xAt(z) {
	return 60 + z / 1.3876 - 69;
}
function yAt(v) {
	return 355.7 - 3.45 * v;
}

var chart = "";
for (var v = 0; v <= 100; v += 10) {
	chart += '<line x1="36" x2="1089" y1="' + yAt(v) + '" y2="' + yAt(v) + '" stroke="#f0f1f2" stroke-width="2"/>';
	chart += '<text x="33" y="' + yAt(v) + '" text-anchor="end">' + v + "</text>";
}
DAYS.forEach(function (d) {
	var x = d[1] - 69;
	chart += '<line x1="' + x + '" x2="' + x + '" y1="10" y2="360" stroke="#eceeef"/>';
	chart += '<text x="' + x + '" y="371" text-anchor="middle">' + d[0] + " 00:00</text>";
});
SERIES.forEach(function (s, n) {
	var line = s.values.map(function (val, i) {
		return xAt(TX[i]) + "," + yAt(val);
	}).join(" ");
	chart += '<linearGradient id="area' + n + '" gradientUnits="userSpaceOnUse" x1="0" x2="0" y1="' + yAt(s.peak) + '" y2="' + yAt(0) + '">' +
		'<stop offset="0" stop-color="' + s.color + '" stop-opacity="' + s.top + '"/>' +
		'<stop offset="1" stop-color="' + s.color + '" stop-opacity=".03"/></linearGradient>';
	chart += '<polygon fill="url(#area' + n + ')" points="' + xAt(TX[0]) + "," + yAt(0) + " " + line + " " + xAt(TX[TX.length - 1]) + "," + yAt(0) + '"/>';
	chart += '<polyline fill="none" stroke="' + s.color + '" points="' + line + '"/>';
	s.values.forEach(function (val, i) {
		if (i > 0) {
			chart += '<circle r="' + s.rad + '" fill="' + s.color + '" cx="' + xAt(TX[i]) + '" cy="' + yAt(val) + '"/>';
		}
	});
});
document.getElementById("timeseries").innerHTML = chart;

// map labels, coordinates share the scale of the land shapes
var LABELS = [
	["UNITED", 716, 161], ["KINGDOM", 716, 192], ["DENMARK", 849, 150], ["BELARUS", 1020, 211], ["IRELAND", 670, 223],
	["POLAND", 936, 241], ["BELGIUM", 794, 279], ["UKRAINE", 1055, 306], ["KAZAKHSTAN", 1405, 338], ["AUSTRIA", 887, 349],
	["FRANCE", 766, 371], ["ROMANIA", 990, 385], ["ITALY", 872, 455], ["BULGARIA", 998, 456], ["UZBEKISTAN", 1377, 482],
	["SPAIN", 700, 522], ["GREECE", 963, 528], ["TURKEY", 1091, 529], ["TAJIKISTAN", 1444, 535], ["SYRIA", 1131, 611],
	["TUNISIA", 840, 625], ["AFGHANISTAN", 1400, 627], ["IRAQ", 1182, 641], ["IRAN", 1284, 646], ["MOROCCO", 675, 673],
	["ISRAEL", 1090, 680], ["PAKISTAN", 1449, 689], ["ALGERIA", 777, 730], ["LIBYA", 925, 748], ["SAUDI", 1164, 755],
	["EGYPT", 1035, 759], ["UNITED", 1279, 768], ["ARABIA", 1164, 785], ["ARAB", 1279, 795], ["EMIRATES", 1279, 822],
	["INDIA", 1522, 822], ["MAURITANIA", 657, 857], ["NIGER", 839, 898], ["MALI", 725, 918], ["YEMEN", 1218, 918],
	["ERITREA", 1121, 925], ["CHAD", 935, 932], ["SUDAN", 1037, 948], ["SENEGAL", 605, 950], ["BURKINA", 731, 972],
	["FASO", 731, 999], ["ETHIOPIA", 1128, 1016], ["SIERRA", 631, 1026], ["NIGERIA", 826, 1026], ["SOUTH", 1039, 1038],
	["LEONE", 631, 1053], ["GHANA", 737, 1050], ["SUDAN", 1039, 1065], ["LIBERIA", 655, 1082], ["SRI LANKA", 1546, 1056],
	["VENEZUELA", 85, 1049], ["SURINAME", 195, 1108], ["CAMEROON", 877, 1101], ["KENYA", 1125, 1148], ["GABON", 862, 1185],
	["DEMOCRATIC", 982, 1186], ["REPUBLIC OF", 982, 1216], ["THE CONGO", 982, 1246], ["BRAZIL", 223, 1327], ["ANGOLA", 920, 1352],
	["ZAMBIA", 1018, 1391], ["ZIMBABWE", 1040, 1453], ["MADAGASCAR", 1204, 1462], ["BOTSWANA", 990, 1534], ["PARAGUAY", 177, 1534],
	["BOLIVIA", 100, 1433]
];
var mapText = LABELS.map(function (l) {
	return '<text x="' + (l[1] * 0.5294 - 67.5) + '" y="' + (l[2] * 0.3444 - 43) + '">' + l[0] + "</text>";
}).join("");
mapText += '<text class="ocean" x="693" y="405">Indian</text><text class="ocean" x="693" y="421">Ocean</text>';
document.getElementById("map").insertAdjacentHTML("beforeend", mapText);
```
